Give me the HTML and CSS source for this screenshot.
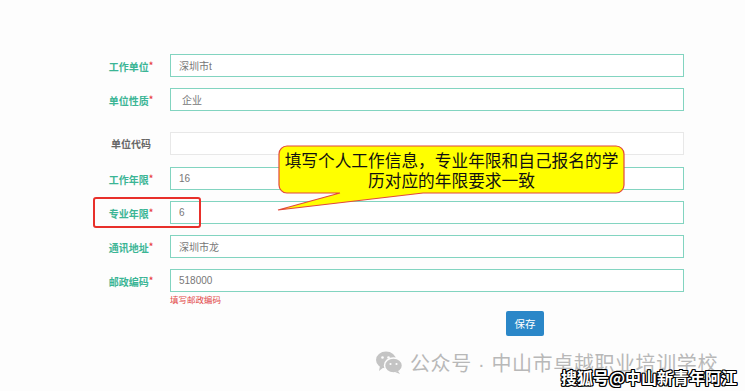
FILE: index.html
```html
<!DOCTYPE html>
<html lang="zh-CN">
<head>
  <meta charset="UTF-8" />
  <meta name="viewport" content="width=device-width, initial-scale=1.0"/>
  <title>工作信息</title>
  <link rel="stylesheet" href="styles.css">
</head>
<body>
<div class="form">
  <div class="row">
    <label class="req">工作单位<i>*</i></label>
    <input type="text" value="深圳市t">
  </div>
  <div class="row">
    <label class="req">单位性质<i>*</i></label>
    <div class="field select">企业</div>
  </div>
  <div class="row gap-top">
    <label>单位代码</label>
    <input type="text" class="plain" value="">
  </div>
  <div class="row">
    <label class="req">工作年限<i>*</i></label>
    <input type="text" value="16">
  </div>
  <div class="row marked">
    <label class="req">专业年限<i>*</i></label>
    <input type="text" value="6">
    <span class="mark"></span>
  </div>
  <div class="row">
    <label class="req">通讯地址<i>*</i></label>
    <input type="text" value="深圳市龙">
  </div>
  <div class="row">
    <label class="req">邮政编码<i>*</i></label>
    <div>
      <input type="text" value="518000">
      <div class="help">填写邮政编码</div>
    </div>
  </div>
  <div class="row actions">
    <span></span>
    <div><button>保存</button></div>
  </div>
</div>

<!-- annotation bubble -->
<div class="callout">
  <svg width="352" height="70" viewBox="0 0 352 70">
    <path d="M11,2 H340 A8,8 0 0 1 348,10 V41 A8,8 0 0 1 340,49 H147 L2,66 L64,49 H11 A8,8 0 0 1 3,41 V10 A8,8 0 0 1 11,2 Z"
          fill="#ffff00" stroke="#e2473d" stroke-width="1.2"/>
  </svg>
  <div class="callout-text">填写个人工作信息，专业年限和自己报名的学<br>历对应的年限要求一致</div>
</div>

<div class="wm">
  <svg width="27" height="23" viewBox="0 0 27 23">
    <ellipse cx="10" cy="9" rx="10" ry="8.5" fill="#c4c4c4"/>
    <path d="M4,15 L3,20 L8,16 Z" fill="#c4c4c4"/>
    <ellipse cx="17.5" cy="14.5" rx="9" ry="7.5" fill="#c4c4c4" stroke="#fdfdfd" stroke-width="1.5"/>
    <path d="M22,20 L24,23 L19,21 Z" fill="#c4c4c4"/>
    <circle cx="6.5" cy="6.5" r="1.3" fill="#fdfdfd"/>
    <circle cx="12.5" cy="6.5" r="1.3" fill="#fdfdfd"/>
    <circle cx="14.5" cy="13" r="1.1" fill="#fdfdfd"/>
    <circle cx="20.5" cy="13" r="1.1" fill="#fdfdfd"/>
  </svg>
  <span>公众号<b class="dot"> · </b>中山市卓越职业培训学校</span>
</div>
<div class="sohu">搜狐号@中山新青年阿江</div>
</body>
</html>
```

FILE: styles.css
```css
* { margin: 0; padding: 0; box-sizing: border-box; }
body {
  background: #fdfdfd;
  font-family: "Noto Sans CJK SC", "Liberation Sans", sans-serif;
  width: 745px;
  height: 391px;
  overflow: hidden;
  position: relative;
}
.form { padding: 54px 0 0 96px; }
.row {
  display: grid;
  grid-template-columns: 70px 514px;
  column-gap: 4px;
  align-items: start;
  margin-bottom: 11px;
  position: relative;
}
.row.gap-top { margin-top: 21px; margin-bottom: 12px; }
label {
  height: 23px;
  line-height: 23px;
  text-align: center;
  font-size: 10px;
  font-weight: bold;
  color: #666;
}
label.req { color: #3bb595; }
label i { color: #e84444; font-style: normal; font-size: 9px; vertical-align: 2px; }
input, .field {
  display: block;
  width: 100%;
  height: 23px;
  border: 1px solid #82d4c0;
  background: #fff;
  padding: 0 8px;
  font-size: 10px;
  line-height: 21px;
  color: #777;
  font-family: "Liberation Sans", "Noto Sans CJK SC", sans-serif;
  outline: none;
}
.field.select { padding-left: 11px; font-family: "Noto Sans CJK SC", sans-serif; }
input.plain { border-color: #e8e8e8; }
.help {
  font-size: 8.5px;
  color: #e24848;
  line-height: 12px;
  margin-top: 1px;
}
.row.actions { margin-top: -7px; }
button {
  margin-left: 336px;
  width: 38px;
  height: 25px;
  background: #2b87c8;
  border: none;
  border-radius: 2px;
  color: #fff;
  font-size: 10.5px;
  font-family: "Noto Sans CJK SC", sans-serif;
}
.mark {
  position: absolute;
  left: -3px;
  top: -4px;
  width: 108px;
  height: 31px;
  border: 2px solid #e8302a;
  border-radius: 3px;
}
.callout {
  position: absolute;
  left: 276px;
  top: 144px;
  width: 352px;
  height: 70px;
}
.callout svg { position: absolute; left: 0; top: 0; }
.callout-text {
  position: absolute;
  left: 3px;
  top: 2px;
  width: 345px;
  height: 47px;
  padding-top: 3.5px;
  text-align: center;
  font-size: 16.7px;
  line-height: 20px;
  color: #111;
}
.wm {
  position: absolute;
  left: 376px;
  top: 348px;
  display: flex;
  align-items: center;
  gap: 7px;
  color: #b8b8b8;
  font-size: 20px;
  letter-spacing: 0.6px;
}
.wm .dot {
  font-family: "Liberation Sans", sans-serif;
  font-weight: normal;
  white-space: pre;
}
.sohu {
  position: absolute;
  left: 561px;
  top: 365px;
  font-size: 16px;
  font-weight: bold;
  color: #fff;
  text-shadow: -1px -1px 0 #000, 1px -1px 0 #000, -1px 1px 0 #000, 1px 1px 0 #000, 0 1px 0 #000, 0 -1px 0 #000, 1px 0 0 #000, -1px 0 0 #000;
}
```
